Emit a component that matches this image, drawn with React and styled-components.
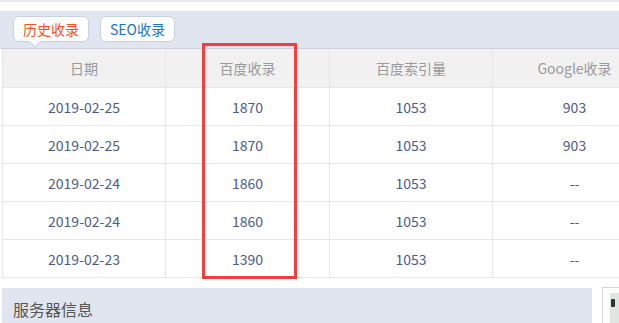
import styled, { createGlobalStyle } from 'styled-components';

const GlobalStyle = createGlobalStyle`
  html, body {
    margin: 0;
    padding: 0;
    background: #fff;
    overflow: hidden;
  }
  body {
    font-family: "Noto Sans CJK SC", "Noto Sans", sans-serif;
  }
`;

const rows = [
  { date: '2019-02-25', baidu: '1870', index: '1053', google: '903' },
  { date: '2019-02-25', baidu: '1870', index: '1053', google: '903' },
  { date: '2019-02-24', baidu: '1860', index: '1053', google: '--' },
  { date: '2019-02-24', baidu: '1860', index: '1053', google: '--' },
  { date: '2019-02-23', baidu: '1390', index: '1053', google: '--' },
];

const App = () => {
  return (
    <Page>
      <GlobalStyle />
      <TopStrip />
      <TabBar>
        <Tab active>历史收录</Tab>
        <Tab>SEO收录</Tab>
      </TabBar>
      <TableWrap>
        <Table>
          <colgroup>
            <col style={{ width: 163 }} />
            <col style={{ width: 164 }} />
            <col style={{ width: 163 }} />
            <col style={{ width: 164 }} />
          </colgroup>
          <thead>
            <tr>
              <Th>日期</Th>
              <Th>百度收录</Th>
              <Th>百度索引量</Th>
              <Th>Google收录</Th>
            </tr>
          </thead>
          <tbody>
            {rows.map((r, i) => (
              <tr key={i}>
                <Td>{r.date}</Td>
                <Td>{r.baidu}</Td>
                <Td>{r.index}</Td>
                <Td>{r.google}</Td>
              </tr>
            ))}
          </tbody>
        </Table>
        <Highlight />
      </TableWrap>
      <Bottom>
        <Panel>服务器信息</Panel>
        <SideBox>
          <SideInner>
            <SideMark />
          </SideInner>
        </SideBox>
      </Bottom>
    </Page>
  );
};

const Page = styled.div`
  width: 619px;
  height: 323px;
  overflow: hidden;
  background: #fff;
`;

const TopStrip = styled.div`
  height: 9px;
  border-top: 2px solid #ebebeb;
`;

const TabBar = styled.div`
  height: 38px;
  background: #e1e5ef;
  border-bottom: 1px solid #cdd2dc;
  box-sizing: border-box;
  display: flex;
  align-items: flex-start;
  gap: 11px;
  padding: 5px 0 0 13px;
`;

const Tab = styled.div`
  position: relative;
  height: 26px;
  padding: 0 9px;
  box-sizing: border-box;
  display: flex;
  align-items: center;
  background: #fff;
  border: 1px solid #c8d1e1;
  border-radius: 6px;
  font-size: 14px;
  color: ${(p) => (p.active ? '#ff4d1c' : '#1b74c8')};

  ${(p) =>
    p.active &&
    `
    &::after {
      content: '';
      position: absolute;
      left: 17px;
      bottom: -5px;
      width: 7px;
      height: 7px;
      background: #fff;
      border-right: 1px solid #c8d1e1;
      border-bottom: 1px solid #c8d1e1;
      transform: rotate(45deg);
    }
  `}
`;

const TableWrap = styled.div`
  position: relative;
  padding-left: 2px;
`;

const Table = styled.table`
  border-collapse: collapse;
  table-layout: fixed;
  width: 654px;
`;

const Th = styled.th`
  height: 38px;
  padding: 0;
  background: #f1f1f1;
  border: 1px solid #e6e6e6;
  border-top: none;
  font-weight: normal;
  font-size: 14px;
  color: #999;
  text-align: center;
`;

const Td = styled.td`
  height: 37px;
  padding: 0;
  border: 1px solid #e6e6e6;
  font-size: 14px;
  color: #4b5b89;
  text-align: center;
`;

const Highlight = styled.div`
  position: absolute;
  left: 202px;
  top: -6px;
  width: 89px;
  height: 230px;
  border: 3px solid #f63e3e;
  pointer-events: none;
`;

const Bottom = styled.div`
  display: flex;
  align-items: flex-start;
  gap: 10px;
  margin-top: 10px;
  padding-left: 2px;
`;

const Panel = styled.div`
  width: 590px;
  height: 40px;
  flex-shrink: 0;
  background: #e1e5ef;
  box-sizing: border-box;
  padding: 9px 0 0 11px;
  font-size: 16px;
  color: #555;
`;

const SideBox = styled.div`
  flex-shrink: 0;
  width: 30px;
  height: 40px;
  margin-top: -1px;
  border: 1px solid #d6d6d6;
  box-sizing: border-box;
  padding: 5px 0 0 7px;
`;

const SideInner = styled.div`
  width: 30px;
  height: 40px;
  background: #dfe5e1;
  padding: 6px 0 0 1px;
  box-sizing: border-box;
`;

const SideMark = styled.div`
  width: 4px;
  height: 8px;
  background: #333;
  border-radius: 1px;
`;

export default App;
